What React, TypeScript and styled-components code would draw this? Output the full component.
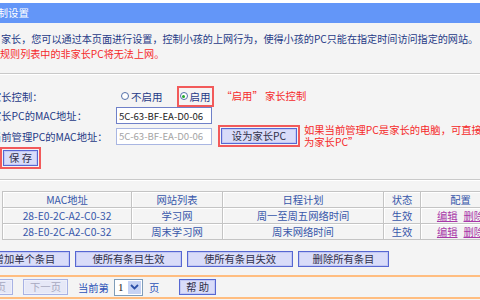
import React, { FC } from "react";
import styled, { createGlobalStyle } from "styled-components";

const Colors = {
  BAR_BLUE: "#6396f8",
  PAGE: "#f4f4f4",
  NAVY: "#1f3a86",
  RED: "#f52a2a",
  NOTE_BOX: "#f25a5a",
  CELL_BLUE: "#3757aa",
  LINK: "#a838a8",
  BTN_FILL: "#d9dcf9",
  BTN_BORDER: "#5767d2",
  RULE: "#c9c9c9",
  ORANGE: "#ffbd80"
};

const GlobalStyle = createGlobalStyle`
  html, body {
    margin: 0;
    padding: 0;
    background: ${Colors.PAGE};
  }
  body {
    font-family: "Noto Sans CJK SC", "Noto Sans", sans-serif;
    font-size: 10.3px;
  }
`;

const Page = styled.div`
  width: 480px;
  height: 300px;
  overflow: hidden;
  box-sizing: border-box;
  border-top: 3px solid #fff;
  background: ${Colors.PAGE};
  white-space: nowrap;
`;

const TitleBar = styled.div`
  height: 20px;
  line-height: 20px;
  background: ${Colors.BAR_BLUE};
  color: #fff;
  font-size: 10.5px;
  text-indent: -34px;
`;

const Intro = styled.div`
  padding-top: 8px;
  line-height: 15px;
  font-size: 10.1px;
`;

const IntroLine = styled.div<{ $red?: boolean }>`
  color: ${(props) => (props.$red ? Colors.RED : Colors.NAVY)};
  text-indent: ${(props) => (props.$red ? "0" : "1px")};
`;

const Rule = styled.div<{ $top: number }>`
  margin-top: ${(props) => props.$top}px;
  height: 1px;
  background: ${Colors.RULE};
  border-bottom: 1px solid #fff;
`;

const Form = styled.div`
  padding-top: 11px;
`;

const FormRow = styled.div<{ $h: number }>`
  display: flex;
  align-items: center;
  height: ${(props) => props.$h}px;
`;

const Label = styled.div`
  width: 116px;
  flex: none;
  color: ${Colors.NAVY};
  text-indent: -9px;
`;

const RadioOption = styled.label<{ $ml?: number }>`
  display: flex;
  align-items: center;
  gap: 2px;
  margin-left: ${(props) => props.$ml ?? 0}px;
  color: ${Colors.NAVY};
  font-size: 10.5px;
`;

const RadioDot = styled.span<{ $on?: boolean }>`
  width: 8px;
  height: 8px;
  box-sizing: border-box;
  border-radius: 50%;
  border: 1px solid #5570a8;
  background: #fff;
  display: flex;
  align-items: center;
  justify-content: center;
  &::after {
    content: "";
    width: 3px;
    height: 3px;
    border-radius: 50%;
    background: ${(props) => (props.$on ? "#1fa82a" : "transparent")};
  }
`;

const NoteBox = styled.div<{ $ml?: number }>`
  display: flex;
  align-items: center;
  margin-left: ${(props) => props.$ml ?? 0}px;
  border: 2px solid ${Colors.NOTE_BOX};
  padding: 1px;
`;

const NoteText = styled.div<{ $ml: number }>`
  margin-left: ${(props) => props.$ml}px;
  color: ${Colors.RED};
  line-height: 12.5px;
`;

const MacInput = styled.input<{ $off?: boolean }>`
  width: 96px;
  height: 17px;
  box-sizing: border-box;
  margin: 0;
  padding: 0 0 0 2px;
  border: 1px solid ${(props) => (props.$off ? "#a9b6e2" : "#6f80c8")};
  background: #fff;
  color: ${(props) => (props.$off ? "#a4a4a4" : "#222")};
  font-family: inherit;
  font-size: 9.6px;
  outline: none;
`;

const Button = styled.button<{ $w: number; $off?: boolean; $ml?: number }>`
  width: ${(props) => props.$w}px;
  height: 16px;
  flex: none;
  box-sizing: border-box;
  margin: 0 0 0 ${(props) => props.$ml ?? 0}px;
  padding: 0;
  border: 1px solid ${(props) => (props.$off ? "#a8b2e4" : Colors.BTN_BORDER)};
  box-shadow: inset 0 0 0 1px ${(props) => (props.$off ? "#eef0fb" : "#c2c8f4")};
  background: ${(props) => (props.$off ? "#e6e8f7" : Colors.BTN_FILL)};
  color: ${(props) => (props.$off ? "#a6a8c0" : "#30304a")};
  font-family: inherit;
  font-size: 10.3px;
  line-height: 14px;
  white-space: nowrap;
`;

const Table = styled.table`
  margin: 10px 0 0 2px;
  border-collapse: collapse;
  table-layout: fixed;
  width: 498px;
`;

const Col = styled.col<{ $w: number }>`
  width: ${(props) => props.$w}px;
`;

const Cell = styled.td`
  height: 15px;
  padding: 0;
  border: 1px solid #c4c4c4;
  box-shadow: inset 1px 1px 0 #fff;
  text-align: center;
  color: ${Colors.CELL_BLUE};
  font-weight: normal;
  font-size: 10.3px;
  line-height: 15px;
  white-space: nowrap;
`;

const Links = styled.span`
  display: inline-flex;
  gap: 6px;
`;

const Link = styled.a`
  color: ${Colors.LINK};
  text-decoration: underline;
`;

const ActionRow = styled.div`
  display: flex;
  gap: 5px;
  margin: 11px 0 0 -21px;
  height: 16px;
`;

const OrangeRule = styled.div<{ $top: number }>`
  margin-top: ${(props) => props.$top}px;
  height: 2px;
  background: ${Colors.ORANGE};
`;

const Pager = styled.div`
  display: flex;
  align-items: center;
  height: 20px;
  margin-left: -32px;
`;

const PagerText = styled.span<{ $ml: number }>`
  margin-left: ${(props) => props.$ml}px;
  color: #2f55b8;
`;

const Select = styled.div`
  margin-left: 5px;
  width: 29px;
  height: 17px;
  box-sizing: border-box;
  border: 1px solid #7f9db9;
  background: #fff;
  display: flex;
  align-items: center;
  justify-content: space-between;
  padding: 1px 1px 1px 3px;
  color: #222;
  font-family: "Liberation Serif", serif;
  font-size: 11px;
`;

const SelectArrow = styled.span`
  width: 13px;
  height: 13px;
  background: #c6d3f5;
  display: flex;
  align-items: center;
  justify-content: center;
`;

interface IRow {
  mac: string;
  site: string;
  plan: string;
  state: string;
}

const rows: IRow[] = [
  { mac: "28-E0-2C-A2-C0-32", site: "学习网", plan: "周一至周五网络时间", state: "生效" },
  { mac: "28-E0-2C-A2-C0-32", site: "周末学习网", plan: "周末网络时间", state: "生效" }
];

const RuleTable: FC = () => (
  <Table>
    <colgroup>
      <Col $w={129} />
      <Col $w={91} />
      <Col $w={161} />
      <Col $w={37} />
      <Col $w={80} />
    </colgroup>
    <thead>
      <tr>
        <Cell as="th">MAC地址</Cell>
        <Cell as="th">网站列表</Cell>
        <Cell as="th">日程计划</Cell>
        <Cell as="th">状态</Cell>
        <Cell as="th">配置</Cell>
      </tr>
    </thead>
    <tbody>
      {rows.map((r, i) => (
        <tr key={i}>
          <Cell>{r.mac}</Cell>
          <Cell>{r.site}</Cell>
          <Cell>{r.plan}</Cell>
          <Cell>{r.state}</Cell>
          <Cell>
            <Links>
              <Link>编辑</Link>
              <Link>删除</Link>
            </Links>
          </Cell>
        </tr>
      ))}
    </tbody>
  </Table>
);

const App: FC = () => (
  <>
    <GlobalStyle />
    <Page>
      <TitleBar>家长控制设置</TitleBar>
      <Intro>
        <IntroLine>家长，您可以通过本页面进行设置，控制小孩的上网行为，使得小孩的PC只能在指定时间访问指定的网站。</IntroLine>
        <IntroLine $red>规则列表中的非家长PC将无法上网。</IntroLine>
      </Intro>
      <Rule $top={12} />
      <Form>
        <FormRow $h={20}>
          <Label>家长控制：</Label>
          <RadioOption $ml={5}>
            <RadioDot />
            不启用
          </RadioOption>
          <NoteBox $ml={14}>
            <RadioOption>
              <RadioDot $on />
              启用
            </RadioOption>
          </NoteBox>
          <NoteText $ml={8}>“启用” 家长控制</NoteText>
        </FormRow>
        <FormRow $h={19}>
          <Label>家长PC的MAC地址：</Label>
          <MacInput readOnly value="5C-63-BF-EA-D0-06" />
        </FormRow>
        <FormRow $h={22}>
          <Label>当前管理PC的MAC地址：</Label>
          <MacInput $off readOnly value="5C-63-BF-EA-D0-06" />
          <NoteBox $ml={6}>
            <Button $w={76}>设为家长PC</Button>
          </NoteBox>
          <NoteText $ml={4}>
            如果当前管理PC是家长的电脑，可直接点击“设
            <br />
            为家长PC”
          </NoteText>
        </FormRow>
        <FormRow $h={22}>
          <NoteBox>
            <Button $w={35}>保 存</Button>
          </NoteBox>
        </FormRow>
      </Form>
      <Rule $top={10} />
      <RuleTable />
      <ActionRow>
        <Button $w={91}>增加单个条目</Button>
        <Button $w={107}>使所有条目生效</Button>
        <Button $w={106}>使所有条目失效</Button>
        <Button $w={91}>删除所有条目</Button>
      </ActionRow>
      <OrangeRule $top={8} />
      <Pager>
        <Button $w={45} $off>上一页</Button>
        <Button $w={45} $off $ml={10}>下一页</Button>
        <PagerText $ml={10}>当前第</PagerText>
        <Select>
          1
          <SelectArrow>
            <svg width="9" height="6" viewBox="0 0 9 6">
              <path d="M1 1 L4.5 4.5 L8 1" fill="none" stroke="#2b4fa8" strokeWidth="1.8" />
            </svg>
          </SelectArrow>
        </Select>
        <PagerText $ml={6}>页</PagerText>
        <Button $w={37} $ml={20}>帮 助</Button>
      </Pager>
      <OrangeRule $top={0} />
    </Page>
  </>
);

export default App;
